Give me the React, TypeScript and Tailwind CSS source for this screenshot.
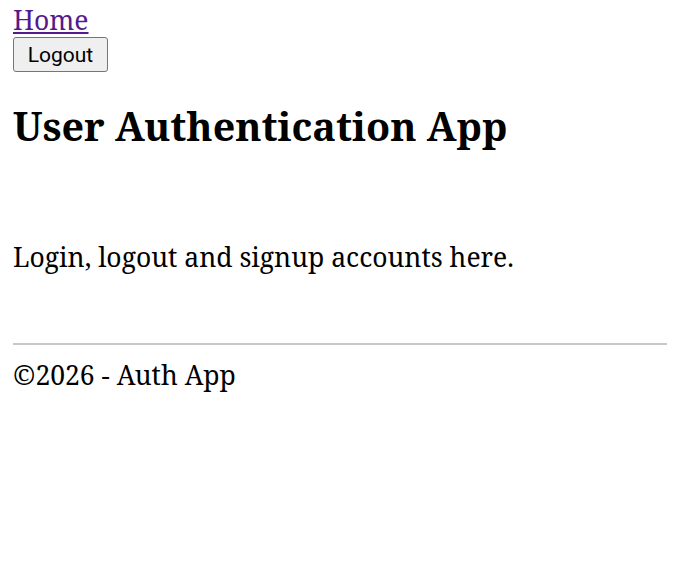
export default function App() {
  return (
    <div className="min-h-screen bg-white pt-[4px] px-[13px] font-['Noto_Serif','DejaVu_Serif',serif] text-black">
      <nav>
        <div className="leading-[32px] text-[26.5px]">
          <a href="#" className="text-[#551a8b] underline">
            Home
          </a>
        </div>
        <button className="mt-[1px] h-[35px] w-[95px] rounded-[3px] border border-[#767676] bg-[#efefef] pt-[2px] font-['Roboto',Arial,sans-serif] text-[21px] leading-none text-black">
          Logout
        </button>
      </nav>
      <main>
        <h1 className="mt-[24px] text-[39.5px] leading-[60px] font-bold">User Authentication App</h1>
        <p className="mt-[84px] text-[26.5px] leading-[34px]">Login, logout and signup accounts here.</p>
      </main>
      <footer className="mt-[69px]">
        <hr className="border-t-2 border-[#c8c8c8]" />
        <p className="mt-[13px] text-[26.5px] leading-[34px]">©2026 - Auth App</p>
      </footer>
    </div>
  );
}
